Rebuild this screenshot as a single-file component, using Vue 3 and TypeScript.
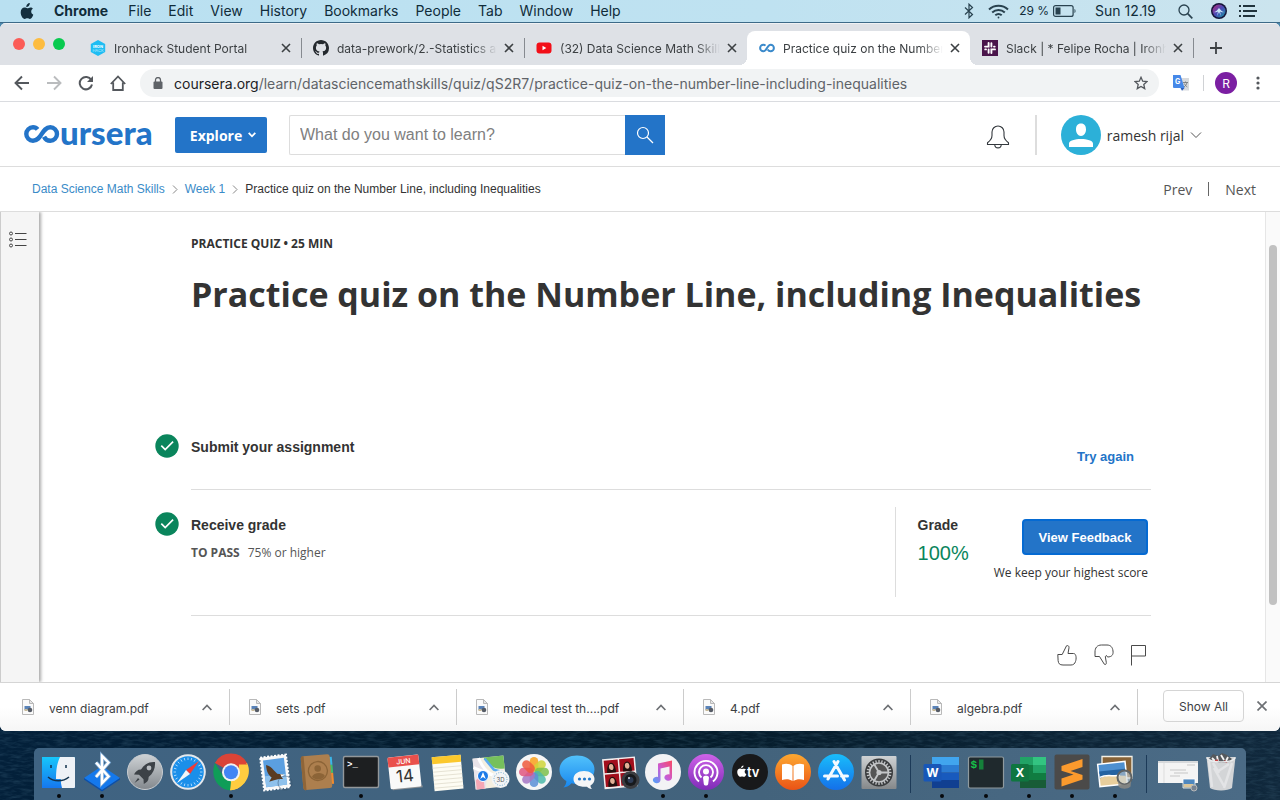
<script setup lang="ts">
import { ref } from 'vue'

interface BrowserTab {
  title: string
  icon: 'ironhack' | 'github' | 'youtube' | 'coursera' | 'slack'
  active?: boolean
}

const menus: string[] = ['File', 'Edit', 'View', 'History', 'Bookmarks', 'People', 'Tab', 'Window', 'Help']

const tabs: BrowserTab[] = [
  { title: 'Ironhack Student Portal', icon: 'ironhack' },
  { title: 'data-prework/2.-Statistics at', icon: 'github' },
  { title: '(32) Data Science Math Skills', icon: 'youtube' },
  { title: 'Practice quiz on the Number', icon: 'coursera', active: true },
  { title: 'Slack | * Felipe Rocha | Ironh', icon: 'slack' },
]

const downloads: string[] = ['venn diagram.pdf', 'sets .pdf', 'medical test th....pdf', '4.pdf', 'algebra.pdf']

const query = ref('')
const petals: string[] = ['#f8a01c', '#cfd53a', '#7cc04b', '#4bb8a9', '#5b8fd6', '#a576c4', '#e0567f', '#ef5a3c']
const teeth: number[] = Array.from({ length: 24 }, (_, i) => i * 15)
const ticks: number[] = Array.from({ length: 24 }, (_, i) => i * 15)
</script>

<template>
  <div class="desktop">
    <svg class="sea" aria-hidden="true">
      <filter id="waves" x="0" y="0" width="100%" height="100%">
        <feTurbulence type="fractalNoise" baseFrequency="0.09 0.35" numOctaves="3" seed="7" />
        <feColorMatrix values="0 0 0 0 0.14  0 0 0 0 0.3  0 0 0 0 0.42  1 0 0 0 -0.4" />
      </filter>
      <rect width="100%" height="100%" filter="url(#waves)" opacity=".45" />
    </svg>

    <nav class="menubar" aria-label="Menu bar">
      <button class="apple" aria-label="Apple menu">
        <svg width="14" height="17" viewBox="0 0 14 17"><path fill="#142f3e" d="M9.8 0c.1 1.200-.4 2.200-1 2.900-.7.700-1.600 1.200-2.500 1.100-.1-1.100.4-2.100 1-2.800C7.900.5 8.900.1 9.800 0zM12.900 5.700c-1.200.8-1.700 1.700-1.700 2.900 0 1.400.8 2.600 2.100 3.100-.5 1.500-1.800 4.200-3.400 4.200-1 0-1.400-.6-2.600-.6s-1.600.6-2.500.6C2.700 16 .7 12.400.7 9.200c0-3 1.900-4.700 3.800-4.700 1.200 0 2 .7 2.900.7.800 0 1.700-.8 3.100-.8 1 0 1.900.5 2.400 1.300z"/></svg>
      </button>
      <button class="menu strong">Chrome</button>
      <button v-for="m in menus" :key="m" class="menu">{{ m }}</button>
      <div class="status">
        <svg width="10" height="16" viewBox="0 0 10 16" fill="none" stroke="#29424f" stroke-width="1.200"><path d="M1 4.500l7.500 7L5 14.800V1.200l3.500 3.300-7.500 7"/></svg>
        <svg class="wifi" width="21" height="15" viewBox="0 0 21 15" fill="none" stroke="#29424f" stroke-width="2"><path d="M1 5.500c5.300-5 13.700-5 19 0M4.200 8.500c3.600-3.300 9-3.300 12.600 0M7.300 11.300c1.900-1.600 4.500-1.600 6.400 0"/><circle cx="10.500" cy="13.500" r=".9" fill="#29424f" stroke="none"/></svg>
        <span class="pct">29 %</span>
        <svg class="battery" width="24" height="12" viewBox="0 0 24 12"><rect x=".6" y=".6" width="19.500" height="10.800" rx="2" fill="none" stroke="#29424f" stroke-width="1.200"/><rect x="2.500" y="2.500" width="5" height="7" fill="#29424f"/><path d="M21.500 4v4c1.300-.4 1.300-3.600 0-4z" fill="#29424f"/></svg>
        <span class="clock">Sun 12.19</span>
        <svg class="lens" width="15" height="15" viewBox="0 0 15 15" fill="none" stroke="#29424f" stroke-width="1.300"><circle cx="6" cy="6" r="5"/><path d="M9.700 9.700L14.300 14.300" stroke-width="1.700"/></svg>
        <svg class="siri" width="16" height="16" viewBox="0 0 16 16">
          <defs><linearGradient id="siriG" x1="0" y1="0" x2="1" y2="1"><stop offset="0" stop-color="#f0308f"/><stop offset=".5" stop-color="#5a5ce0"/><stop offset="1" stop-color="#16c7c4"/></linearGradient></defs>
          <circle cx="8" cy="8" r="8" fill="#15153a"/><circle cx="8" cy="8" r="6.500" fill="url(#siriG)" opacity=".75"/><path d="M3 9c2.500-.5 3.500-2.500 5-4 1.500 1.500 2.500 3.500 5 4-2 .6-3 .2-4-.5l1 4.500-2-4-2 4 1-4.500c-1 .7-2 1.100-4 .5z" fill="#d6f4ff" opacity=".9"/>
        </svg>
        <svg width="19" height="12" viewBox="0 0 19 12" fill="#20333c"><path d="M0 0h2v2H0zM0 5h2v2H0zM0 10h2v2H0zM4 0h12v2H4zM4 5h14v2H4zM4 10h12v2H4z"/></svg>
      </div>
    </nav>

    <div class="window">
      <header class="tabstrip">
        <div class="lights"><i class="red"></i><i class="amber"></i><i class="green"></i></div>
        <div v-for="t in tabs" :key="t.icon" class="tab" :class="{ active: t.active }">
          <svg v-if="t.icon === 'ironhack'" width="16" height="16" viewBox="0 0 16 16"><path d="M8 0l7.200 4v8L8 16 .8 12V4z" fill="#1fbdf3"/><text x="8" y="7.500" font-size="4" font-weight="700" text-anchor="middle" fill="#fff">IRON</text><text x="8" y="11.500" font-size="4" text-anchor="middle" fill="#b4ebff">HACK</text></svg>
          <svg v-else-if="t.icon === 'github'" width="16" height="16" viewBox="0 0 16 16" fill="#24292e"><path d="M8 0C3.580 0 0 3.580 0 8c0 3.540 2.290 6.530 5.470 7.590.4.070.55-.17.55-.38v-1.340c-2.230.49-2.700-1.070-2.700-1.070-.36-.92-.89-1.170-.89-1.170-.73-.5.05-.49.05-.49.81.06 1.230.83 1.230.83.72 1.230 1.880.87 2.340.67.07-.52.28-.87.51-1.070-1.780-.2-3.640-.89-3.640-3.950 0-.87.31-1.590.82-2.150-.08-.2-.36-1.020.08-2.120 0 0 .67-.21 2.200.82a7.600 7.600 0 0 1 4 0c1.530-1.040 2.200-.82 2.200-.82.44 1.100.16 1.920.08 2.120.51.56.82 1.270.82 2.150 0 3.070-1.870 3.750-3.650 3.950.29.25.54.73.54 1.480v2.190c0 .21.150.46.55.38A8 8 0 0 0 16 8c0-4.420-3.580-8-8-8z"/></svg>
          <svg v-else-if="t.icon === 'youtube'" width="16" height="16" viewBox="0 0 16 16"><rect x=".5" y="2.500" width="15" height="11" rx="3" fill="#f20f18"/><path d="M6.500 5.800v4.400L10.300 8z" fill="#fff"/></svg>
          <svg v-else-if="t.icon === 'coursera'" width="16" height="16" viewBox="0 0 16 16"><path d="M6.500 5.600C5.900 5 5.200 4.700 4.400 4.700a3.300 3.300 0 0 0 0 6.600c3.600 0 3.600-6.600 7.200-6.600a3.300 3.300 0 0 1 0 6.600c-1.300 0-2.300-.7-2.900-1.700" fill="none" stroke="#3b8acb" stroke-width="2"/></svg>
          <svg v-else width="16" height="16" viewBox="0 0 16 16"><path fill="#4a154b" d="M0 0h16v16H0z"/><g fill="none" stroke="#fff" stroke-width="1.900" stroke-linecap="round"><path d="M6.600 3v3.600H3M9.400 3.300v3.300M12.700 6.600H12M13 9.400H9.400V13M6.600 12.700V9.400M3.200 9.400H4"/></g></svg>
          <span class="tabtitle">{{ t.title }}</span>
          <button class="close" :aria-label="'Close ' + t.title"><svg width="10" height="10" viewBox="0 0 10 10" stroke="#3c4043" stroke-width="1.600"><path d="M1 1l8 8M9 1L1 9"/></svg></button>
        </div>
        <button class="newtab" aria-label="New tab"><svg width="12" height="12" viewBox="0 0 12 12" stroke="#3c4043" stroke-width="1.800"><path d="M6 0v12M0 6h12"/></svg></button>
      </header>

      <div class="toolbar">
        <button aria-label="Back"><svg width="16" height="16" viewBox="0 0 16 16" fill="none" stroke="#54585d" stroke-width="1.900"><path d="M15 8H2M8 1.500L1.500 8 8 14.500"/></svg></button>
        <button aria-label="Forward"><svg width="16" height="16" viewBox="0 0 16 16" fill="none" stroke="#babcbe" stroke-width="1.900"><path d="M1 8h13M8 1.500L14.500 8 8 14.500"/></svg></button>
        <button aria-label="Reload"><svg width="16" height="16" viewBox="0 0 16 16"><path d="M13.300 5A6.200 6.200 0 1 0 14 9.500" fill="none" stroke="#54585d" stroke-width="2"/><path d="M15 1v6H9z" fill="#54585d"/></svg></button>
        <button aria-label="Home"><svg width="16" height="16" viewBox="0 0 16 16" fill="none" stroke="#54585d" stroke-width="1.800"><path d="M.8 9L8 1.500 15.200 9M3.200 7.500V15h9.600V7.500"/></svg></button>
        <div class="omnibox">
          <svg width="10" height="12" viewBox="0 0 10 12"><rect x=".5" y="4.500" width="9" height="7.500" rx="1" fill="#5f6368"/><path d="M2.500 5V3a2.500 2.500 0 0 1 5 0v2" fill="none" stroke="#5f6368" stroke-width="1.300"/></svg>
          <span class="url"><b>coursera.org</b>/learn/datasciencemathskills/quiz/qS2R7/practice-quiz-on-the-number-line-including-inequalities</span>
          <svg width="14" height="14" viewBox="0 0 14 14" fill="none" stroke="#54585d" stroke-width="1.300"><path d="M7 1.300l1.700 3.900 4.300.4-3.200 2.800.9 4.200L7 10.400l-3.700 2.200.9-4.200L1 5.600l4.300-.4z"/></svg>
        </div>
        <svg class="translate" width="16" height="16" viewBox="0 0 16 16"><path fill="#d8dadd" d="M6 3h10v12.500H9z"/><path fill="#4688e8" d="M0 0h7.500l4 13H1a1 1 0 0 1-1-1z"/><path d="M7.500 13h4L9 15.700z" fill="#2b5ebd"/><text x="2" y="8.500" font-size="7" font-weight="700" fill="#fff">G</text><path d="M10 7.500h5M12.500 6.500v1M14 7.500c-.5 2-1.500 3.500-3 4.500M11.300 8.500c.5 1.500 1.700 2.500 3 3.500" stroke="#6d7175" stroke-width=".8" fill="none"/></svg>
        <i class="bar"></i>
        <button class="me" aria-label="Profile">R</button>
        <button class="more" aria-label="More"><svg width="4" height="14" viewBox="0 0 4 14" fill="#54585d"><circle cx="2" cy="2" r="1.600"/><circle cx="2" cy="7" r="1.600"/><circle cx="2" cy="12" r="1.600"/></svg></button>
      </div>

      <div class="site">
        <a class="logo" href="#" aria-label="coursera">
          <svg width="36" height="18" viewBox="0 0 36 18" fill="none" stroke="#2374c8" stroke-width="4.400"><path d="M13.600 4.400C12.500 3 11 2.300 9 2.300a6.700 6.700 0 0 0 0 13.400C18 15.700 17.500 2.300 26.300 2.300a6.700 6.700 0 0 1 0 13.400c-2.900 0-5.100-1.500-6.300-4"/></svg><span>ursera</span>
        </a>
        <button class="explore">Explore <svg width="8" height="6" viewBox="0 0 8 6" fill="none" stroke="#fff" stroke-width="1.800"><path d="M.7.900L4 4.300 7.300.9"/></svg></button>
        <form class="search" @submit.prevent>
          <input v-model="query" type="text" aria-label="Search" placeholder="What do you want to learn?" />
          <button aria-label="Search"><svg width="18" height="18" viewBox="0 0 18 18" fill="none" stroke="#fff" stroke-width="1.200"><circle cx="7" cy="7" r="5.500"/><path d="M11 11l6 6"/></svg></button>
        </form>
        <button class="bell" aria-label="Notifications"><svg width="24" height="26" viewBox="0 0 24 26" fill="none" stroke="#33383d" stroke-width="1.100"><path d="M1.500 20.500v-1.800C4.500 16.500 6 14.500 6 11.500V8a6 6 0 0 1 12 0v3.500c0 3 1.500 5 4.500 7.200v1.800zM8.700 20.500c.3 4.500 6.300 4.500 6.600 0"/></svg></button>
        <i class="rule"></i>
        <button class="account">
          <svg width="40" height="40" viewBox="0 0 40 40"><circle cx="20" cy="20" r="20" fill="#2cb0d8"/><path fill="#fff" d="M20 8.500c3.500 0 5 2.500 5 6s-2 6.500-5 6.500-5-3-5-6.500 1.500-6 5-6zM8 32v-3.500C8 25.500 14 24 20 24s12 1.500 12 4.500V32z"/></svg>
          <span>ramesh rijal</span>
          <svg width="12" height="8" viewBox="0 0 12 8" fill="none" stroke="#555"><path d="M1 1.500l5 5 5-5"/></svg>
        </button>
      </div>

      <div class="crumbs">
        <a href="#">Data Science Math Skills</a>
        <svg width="6" height="9" viewBox="0 0 6 9" fill="none" stroke="#888"><path d="M1 .5l4 4-4 4"/></svg>
        <a href="#">Week 1</a>
        <svg width="6" height="9" viewBox="0 0 6 9" fill="none" stroke="#888"><path d="M1 .5l4 4-4 4"/></svg>
        <span>Practice quiz on the Number Line, including Inequalities</span>
        <div class="pager"><a href="#">Prev</a><i></i><a href="#">Next</a></div>
      </div>

      <div class="page">
        <aside class="rail">
          <button aria-label="Course outline"><svg width="18" height="17" viewBox="0 0 18 17" fill="none" stroke="#444"><circle cx="2" cy="2.500" r="1.500"/><circle cx="2" cy="8.500" r="1.500"/><circle cx="2" cy="14.500" r="1.500"/><path d="M6 2.500h11.500M6 8.500h11.500M6 14.500h11.500"/></svg></button>
        </aside>
        <main class="content">
          <p class="kind">PRACTICE QUIZ • 25 MIN</p>
          <h1>Practice quiz on the Number Line, including Inequalities</h1>

          <section class="step first">
            <svg class="check" width="24" height="24" viewBox="0 0 24 24"><circle cx="12" cy="12" r="11.700" fill="#0a855c"/><path d="M6.300 11.700l3.900 3.900 7.900-7.900" fill="none" stroke="#fff" stroke-width="1.700"/></svg>
            <h2>Submit your assignment</h2>
            <button class="again">Try again</button>
          </section>

          <section class="step second">
            <svg class="check" width="24" height="24" viewBox="0 0 24 24"><circle cx="12" cy="12" r="11.700" fill="#0a855c"/><path d="M6.300 11.700l3.900 3.900 7.900-7.900" fill="none" stroke="#fff" stroke-width="1.700"/></svg>
            <div class="receive">
              <h2>Receive grade</h2>
              <p><strong>TO PASS</strong>75% or higher</p>
            </div>
            <div class="grade">
              <div class="score"><h2>Grade</h2><span>100%</span></div>
              <div class="feedback"><button>View Feedback</button><p>We keep your highest score</p></div>
            </div>
          </section>

          <div class="react">
            <button aria-label="Like"><svg width="20" height="22" viewBox="0 0 20 22" fill="none" stroke="#4a4a4a" stroke-width="1"><path d="M.8 10.500h4.400L9.500 1.800c1.500-.6 2.700.2 2.500 2L11 9.500h5.500c3 0 3 5.500 2 8-.7 2.300-2.200 3.500-4.500 3.500H6c-3.500 0-4.600-1.500-4.900-4.500z"/></svg></button>
            <button aria-label="Dislike"><svg width="20" height="22" viewBox="0 0 20 22" fill="none" stroke="#4a4a4a" stroke-width="1"><path d="M1 12.500h4.500l4.800 7.700c1.200.8 2.200 0 2-1.700l-1-6 1.200-1 1 1.500c4.500 0 6-2.500 5.500-6-.5-4-2.500-6-6-6H7.500C3 1 1 4 1 8z"/></svg></button>
            <button aria-label="Flag"><svg width="16" height="22" viewBox="0 0 16 22" fill="none" stroke="#4a4a4a" stroke-width="1"><path d="M.5 21.500v-20h14v10.500H.5"/></svg></button>
          </div>
        </main>
        <div class="scroll"><i></i></div>
      </div>

      <footer class="downloads">
        <div v-for="d in downloads" :key="d" class="file">
          <svg width="12" height="16" viewBox="0 0 12 16"><path d="M.5.500h7L11.500 4.500v11H.5z" fill="#fafafa" stroke="#b9b9b9"/><path d="M7.500.500v4h4z" fill="#e6e6e6" stroke="#b9b9b9"/><path d="M2.500 7h6v4h-6z" fill="#5a83b8"/><circle cx="8" cy="11" r="2.300" fill="#565c66"/><path d="M2.500 10h3v2h-3z" fill="#c8ba98"/></svg>
          <a href="#">{{ d }}</a>
          <button :aria-label="'Options for ' + d"><svg width="10" height="7" viewBox="0 0 10 7" fill="none" stroke="#6d7074" stroke-width="1.700"><path d="M.6 6L5 1.400 9.400 6"/></svg></button>
        </div>
        <button class="showall">Show All</button>
        <button class="shut" aria-label="Close downloads"><svg width="10" height="10" viewBox="0 0 10 10" stroke="#6d7074" stroke-width="1.700"><path d="M.5.500l9 9M9.500.500l-9 9"/></svg></button>
      </footer>
    </div>

    <nav class="dock" aria-label="Dock">
      <button class="app on" aria-label="Finder"><svg viewBox="0 0 40 40"><defs><linearGradient id="gFind" x1="0" y1="0" x2="0" y2="1"><stop offset="0" stop-color="#16c6fb"/><stop offset="1" stop-color="#1677ee"/></linearGradient></defs><path fill="url(#gFind)" d="M3 5h33v31H3z"/><path d="M21 5h14a1 1 0 0 1 1 1v29a1 1 0 0 1-1 1H23c-1-4-1.200-6-1.200-9H17C17 18 18 11 21 5z" fill="#eef1f6"/><path d="M12 13v3M27 13v3M9 25c5.500 5 15 5 21 0" stroke="#12324e" stroke-width="1.500" fill="none"/></svg></button>
      <button class="app on" aria-label="Bluetooth"><svg viewBox="0 0 40 40"><path d="M20 14l18 12-18 12L2 26z" fill="#1478ec"/><path d="M20 38L2 26v1.500L20 39.500l18-12V26z" fill="#084fae"/><path d="M14 10.500l12.500 14L20 31V4l6.500 6.500L14 25" fill="none" stroke="#7da9d4" stroke-width="4"/><path d="M14 10.500l12.500 14L20 31V4l6.500 6.500L14 25" fill="none" stroke="#fff" stroke-width="2.400"/></svg></button>
      <button class="app" aria-label="Launchpad"><svg viewBox="0 0 40 40"><defs><linearGradient id="gLau" x1="0" y1="0" x2="0" y2="1"><stop offset="0" stop-color="#ced2d5"/><stop offset="1" stop-color="#83888d"/></linearGradient></defs><circle cx="20" cy="20" r="17.500" fill="url(#gLau)" stroke="#c9cdd1"/><path d="M30 10c-6-.5-10.500 2-14 7.500-3.500 0-5.500 2-7 5l5 .2 4.500 4.500.3 4.800c3-1.500 5-3.500 4.800-7C28.500 21 30.500 16 30 10zM13 26l-3.500 5 5-3.500z" fill="#3d4247"/><circle cx="24" cy="16" r="2.400" fill="#b9bdc1"/></svg></button>
      <button class="app" aria-label="Safari"><svg viewBox="0 0 40 40"><circle cx="20" cy="20" r="17.800" fill="#e6e9ec"/><circle cx="20" cy="20" r="15.800" fill="#1a8fea"/><path v-for="a in ticks" :key="a" d="M20 5.500v2.500" stroke="#bfe3ff" stroke-width=".8" :transform="`rotate(${a} 20 20)`"/><path d="M31 9L22 22l-4-4z" fill="#f23b36"/><path d="M9 31l9-13 4 4z" fill="#f3f5f7"/></svg></button>
      <button class="app on" aria-label="Chrome"><svg viewBox="0 0 40 40"><path d="M20 20L4 11a18.300 18.300 0 0 1 32 0z" fill="#db4437"/><path d="M20 20h16.400A18.300 18.300 0 0 1 20 38.300L19 38z" fill="#ffcd40"/><path d="M36 11c3.500 6.500 2 14.500-2.500 20C29 36 24 38.300 19 38.200L27.500 24 28 11z" fill="#ffcd40"/><path d="M4 11l8.500 13.500L20 29l-1 9.200C7 37.800-1.500 24 4 11z" fill="#0f9d58"/><path d="M4 11a18.300 18.300 0 0 1 32 1.500H20z" fill="#db4437"/><circle cx="20" cy="20.300" r="9" fill="#f1f1f1"/><circle cx="20" cy="20.300" r="7" fill="#4285f4"/></svg></button>
      <button class="app" aria-label="Mail"><svg viewBox="0 0 40 40"><g transform="rotate(-7 20 20)"><path d="M7 4h26v33H7z" fill="#f7f7f7" stroke="#fff" stroke-width="2" stroke-dasharray="2 1.500"/><path d="M9.500 7h21v27h-21z" fill="#5b9fe0"/><path d="M9.500 23h21v11h-21z" fill="#8ec1ec"/><path d="M12 12c3 1 5 3 7 6l3 4 6 1.500-2 2 1 2.500-4-.5-5 .5-5 1 3-4c-3-3-4.500-7-4-13z" fill="#5a3c22"/><path d="M25 23l4 1-3 2z" fill="#fff"/></g><circle cx="30" cy="31" r="7" fill="none" stroke="#36506a" stroke-width="1" opacity=".5"/></svg></button>
      <button class="app" aria-label="Contacts"><svg viewBox="0 0 40 40"><g transform="rotate(-5 20 20)"><path d="M32 6h3v8h-3z" fill="#3ab6e8"/><path d="M32 14h3v8h-3z" fill="#44bf67"/><path d="M32 22h3v11h-3z" fill="#ef8b2f"/><rect x="4" y="3" width="29" height="34" rx="2.500" fill="#ad7f4e"/><path d="M4 5a2 2 0 0 1 2-2h1v34H6a2 2 0 0 1-2-2z" fill="#8f6538"/><circle cx="20" cy="19" r="9.500" fill="none" stroke="#8c6437" stroke-width="1.300"/><circle cx="20" cy="16.500" r="3.300" fill="#8c6437"/><path d="M13.500 24.500c2-4.500 11-4.500 13 0-3 4-10 4-13 0z" fill="#8c6437"/></g></svg></button>
      <button class="app on" aria-label="Terminal"><svg viewBox="0 0 40 40"><rect x="2.500" y="4.500" width="35" height="31" rx="1.500" fill="#1d1f21" stroke="#93989b" stroke-width="1.400"/><text x="6" y="15" font-size="9" font-weight="700" font-family="Liberation Mono, monospace" fill="#fff">&gt;_</text></svg></button>
      <button class="app" aria-label="Calendar"><svg viewBox="0 0 40 40"><g transform="rotate(-6 20 20)"><path d="M7 35h30v2H7z" fill="#8b9094"/><rect x="5" y="4" width="31" height="32" rx="1.500" fill="#f9f9f9"/><path d="M5 4h31v10H5z" fill="#e9504c"/><text x="20.500" y="11.800" font-size="7" font-weight="500" text-anchor="middle" fill="#fff">JUN</text><text x="20.500" y="30" font-size="17" text-anchor="middle" fill="#333">14</text></g></svg></button>
      <button class="app" aria-label="Notes"><svg viewBox="0 0 40 40"><g transform="rotate(-5 20 20)"><path d="M6 4h29v34H6z" fill="#fdfcf3"/><path d="M6 4h29v7H6z" fill="#fbc82c"/><path d="M6 15h29M6 19h29M6 23h29M6 27h29M6 31h29M6 35h29" stroke="#dcd8c8" stroke-width=".7"/></g></svg></button>
      <button class="app" aria-label="Maps"><svg viewBox="0 0 40 40"><g transform="rotate(-6 20 20)"><path d="M4 5h31v31H4z" fill="#f4efe0"/><path d="M15 5h20v13c-7 0-10-1-13-4s-5-5-7-9z" fill="#76c05c"/><path d="M4 5h7l7 13-4 18H4z" fill="#e8e4ea"/><path d="M4 14l31 16M10 5c5 16 12 20 25 22" stroke="#fff" stroke-width="3" fill="none"/><path d="M5 27l8-7v16H5z" fill="#f4a7b5"/><path d="M16 6l8 12 10 4" stroke="#5aabf0" stroke-width="2.500" fill="none"/></g><circle cx="13" cy="24" r="5.500" fill="#1b7ae8" stroke="#fff"/><path d="M13 20l2.800 7-2.800-2-2.800 2z" fill="#fff"/><circle cx="30.500" cy="27" r="9" fill="#f3f4f5"/><circle cx="30.500" cy="27" r="6.500" fill="none" stroke="#6caed3" stroke-dasharray="1 1.500"/><text x="30.500" y="29.500" font-size="6" text-anchor="middle" fill="#555">3D</text></svg></button>
      <button class="app" aria-label="Photos"><svg viewBox="0 0 40 40"><circle cx="20" cy="20" r="18" fill="#f6f6f6"/><rect v-for="(c, i) in petals" :key="c" x="15.700" y="5" width="8.600" height="14.500" rx="4.300" :fill="c" fill-opacity=".85" :transform="`rotate(${i * 45} 20 20)`"/></svg></button>
      <button class="app" aria-label="Messages"><svg viewBox="0 0 40 40"><defs><linearGradient id="gMsg" x1="0" y1="0" x2="0" y2="1"><stop offset="0" stop-color="#52c2fb"/><stop offset="1" stop-color="#1887ef"/></linearGradient></defs><path d="M20 3.500c9.700 0 17.500 6 17.500 14S29.700 32 20 32c-2 0-4-.2-5.500-.7C12 34 10 35 6.500 35.500c2-2 3-4 2.800-6.500C5 26.500 2.500 22.500 2.500 17.500c0-8 7.800-14 17.500-14z" fill="url(#gMsg)"/><path d="M27 19c6 0 10.500 3 10.500 8 0 3-1.500 5-4 6.500 0 1.500.5 2.500 1.500 3.500-2.500-.3-4-1-5-2.200-8 .5-13.500-2.300-13.500-7.800 0-5 4.500-8 10.500-8z" fill="#f5f6f7"/><g fill="#2278c9"><circle cx="22.500" cy="27" r="1.600"/><circle cx="27.500" cy="27" r="1.600"/><circle cx="32.500" cy="27" r="1.600"/></g></svg></button>
      <button class="app" aria-label="Photo Booth"><svg viewBox="0 0 40 40"><g transform="rotate(-5 18 18)"><path d="M3 6h33v30H3z" fill="#f3eeee"/><path d="M4.500 7.500h14V20h-14zM20 7.500h14.500V20H20zM4.500 21.500h14V34h-14zM20 21.500h14.500V34H20z" fill="#a20e1c"/><g fill="#24100f"><path d="M7 20c0-13 9-13 9 0zM23 20c0-13 9-13 9 0zM7 34c0-13 9-13 9 0z"/></g><g fill="#e3b197"><ellipse cx="11.500" cy="14.500" rx="2.300" ry="3"/><ellipse cx="27.500" cy="14.500" rx="2.300" ry="3"/><ellipse cx="11.500" cy="28.500" rx="2.300" ry="3"/></g></g><circle cx="30.500" cy="28" r="9" fill="#3b3d41"/><circle cx="30.500" cy="28" r="6" fill="#17191c"/><circle cx="30.500" cy="28" r="3" fill="#2e3c55"/><circle cx="29" cy="26" r="1" fill="#d7dde6"/></svg></button>
      <button class="app on" aria-label="Music"><svg viewBox="0 0 40 40"><defs><linearGradient id="gMus" x1="1" y1="0" x2="0" y2="1"><stop offset="0" stop-color="#fb4a63"/><stop offset=".5" stop-color="#c95bd5"/><stop offset="1" stop-color="#4aa6fb"/></linearGradient></defs><circle cx="20" cy="20" r="18" fill="#f3f3f5"/><path d="M15 11.500l14-3v17a3.800 3.200 0 1 1-2.500-3V14.500l-9 2V28a3.800 3.200 0 1 1-2.500-3z" fill="url(#gMus)"/></svg></button>
      <button class="app on" aria-label="Podcasts"><svg viewBox="0 0 40 40"><defs><linearGradient id="gPod" x1="0" y1="0" x2="0" y2="1"><stop offset="0" stop-color="#cf63e8"/><stop offset="1" stop-color="#7f2cb8"/></linearGradient></defs><circle cx="20" cy="20" r="18" fill="url(#gPod)"/><g fill="none" stroke="#fff" stroke-width="1.900"><path d="M13 29.500a11.500 11.500 0 1 1 14 0M15.500 25.500a7 7 0 1 1 9 0"/></g><circle cx="20" cy="19.500" r="3" fill="#fff"/><path d="M17 25.500c0-2.500 6-2.500 6 0l-.8 6.500c-.4 2-4 2-4.400 0z" fill="#fff"/></svg></button>
      <button class="app" aria-label="TV"><svg viewBox="0 0 40 40"><circle cx="20" cy="20" r="18" fill="#18191b"/><path d="M13.500 13.500c.1 1.300-1 2.600-2.400 2.500 0-1.300 1.100-2.400 2.400-2.500zM16 17.500c-2 1.200-1.600 3.800.4 4.500-.8 2.300-2 3.300-3.200 2.700-.8-.4-1.500-.4-2.300 0-1.800.8-4-2.700-3.600-5.500.4-2.700 2.800-3.200 4.800-2.100 1.400-.7 3-.6 3.900.4z" fill="#fff"/><text x="17" y="24.500" font-size="13" font-weight="600" fill="#fff">tv</text></svg></button>
      <button class="app" aria-label="Books"><svg viewBox="0 0 40 40"><defs><linearGradient id="gBok" x1="0" y1="0" x2="0" y2="1"><stop offset="0" stop-color="#fda830"/><stop offset="1" stop-color="#ea5316"/></linearGradient></defs><circle cx="20" cy="20" r="18" fill="url(#gBok)"/><path d="M19.500 14c-2.500-2.500-7-2.800-10.500-1.500V28c3.500-1 7.500-1 10.500 1zM20.500 14c2.500-2.500 7-2.800 10.500-1.500V28c-3.500-1-7.500-1-10.500 1z" fill="#fff"/></svg></button>
      <button class="app" aria-label="App Store"><svg viewBox="0 0 40 40"><defs><linearGradient id="gSto" x1="0" y1="0" x2="0" y2="1"><stop offset="0" stop-color="#19bdfb"/><stop offset="1" stop-color="#1470ea"/></linearGradient></defs><circle cx="20" cy="20" r="18" fill="url(#gSto)"/><path d="M22 9.500L12 27M18 9.500L28.500 28M8.500 24h13M25.500 24h6" stroke="#f3faff" stroke-width="3" stroke-linecap="round"/></svg></button>
      <button class="app" aria-label="System Preferences"><svg viewBox="0 0 40 40"><defs><linearGradient id="gSys" x1="0" y1="0" x2="0" y2="1"><stop offset="0" stop-color="#cfd2d4"/><stop offset="1" stop-color="#85888a"/></linearGradient></defs><rect x="2.500" y="4" width="35" height="33" rx="1" fill="url(#gSys)"/><circle cx="20" cy="20.500" r="14" fill="#3a3c3e"/><path v-for="a in teeth" :key="a" d="M20 8v2.500" stroke="#c4c6c8" stroke-width="1.300" :transform="`rotate(${a} 20 20.500)`"/><circle cx="20" cy="20.500" r="9.500" fill="#555" stroke="#c4c6c8" stroke-width="1.700"/><path d="M20 20.500h10M20 20.500l-5-8.500M20 20.500l-5 8.500" stroke="#c4c6c8" stroke-width="1.800"/><circle cx="20" cy="20.500" r="2.600" fill="#c4c6c8"/></svg></button>
      <i class="divider"></i>
      <button class="app on" aria-label="Word"><svg viewBox="0 0 40 40"><path fill="#41a5ee" d="M10 5h27v8H10z"/><path fill="#2b7cd3" d="M10 13h27v7.500H10z"/><path fill="#185abd" d="M10 20.500h27V28H10z"/><path fill="#103f91" d="M10 28h27v8H10z"/><rect x="1.500" y="12" width="18" height="17.500" rx="1.500" fill="#1857b8"/><text x="10.500" y="25" font-size="12" font-weight="700" text-anchor="middle" fill="#fff">W</text></svg></button>
      <button class="app on" aria-label="iTerm"><svg viewBox="0 0 40 40"><rect x="2.500" y="5" width="35" height="31" rx="1.500" fill="#1f292d" stroke="#8f9a9e" stroke-width="1.200"/><text x="4.500" y="16" font-size="11" font-weight="700" font-family="Liberation Mono, monospace" fill="#17c24a">$</text><path d="M13 7.500h4.500v10H13z" fill="#15803a"/></svg></button>
      <button class="app on" aria-label="Excel"><svg viewBox="0 0 40 40"><path fill="#21a366" d="M11 5h13v8H11z"/><path fill="#33c481" d="M24 5h13v8H24z"/><path fill="#107c41" d="M11 13h13v15H11z"/><path fill="#21a366" d="M24 13h13v8H24z"/><path fill="#107c41" d="M24 21h13v7H24z"/><path fill="#185c37" d="M11 28h26v8H11z"/><rect x="2" y="12" width="18" height="17.500" rx="1.500" fill="#0f7640"/><text x="11" y="25" font-size="12" font-weight="700" text-anchor="middle" fill="#fff">X</text></svg></button>
      <button class="app on" aria-label="Sublime Text"><svg viewBox="0 0 40 40"><rect x="2.500" y="2.500" width="35" height="35" rx="2" fill="#4b4a49"/><path d="M9.500 14L30.500 7v8l-12 4 12 4v4.500l-21 7v-8l12-4-12-3.800z" fill="#fb9a2d"/></svg></button>
      <button class="app on" aria-label="Preview"><svg viewBox="0 0 40 40"><path d="M7 4.500h30V26H7z" fill="#866237" stroke="#f5f1e6" stroke-width="1.300"/><g transform="rotate(-6 18 22)"><path d="M3 10h29v24H3z" fill="#fff"/><path d="M4.500 11.500h26v9h-26z" fill="#4d8fcf"/><path d="M4.500 18h26v8h-26z" fill="#2563a1"/><path d="M4.500 25c8-4 17-1 26 0v7.500h-26z" fill="#e7ce9c"/><path d="M4.500 24c8-3 13 1 20 0" stroke="#fff" stroke-width="1.500" fill="none"/></g><circle cx="29.500" cy="25.500" r="7" fill="#c9d3d8" fill-opacity=".6" stroke="#5e6365" stroke-width="2"/><path d="M23 29c3 5 10 5 13 0l-.5 5.500c-3 3-9 3-12 0z" fill="#8b8984" opacity=".85"/></svg></button>
      <i class="divider"></i>
      <button class="app" aria-label="Minimised document"><svg viewBox="0 0 40 40"><path d="M0 9h40v22H0z" fill="#f4f4f4"/><path d="M0 9h40v2H0z" fill="#d7d9db"/><path d="M6 11v20" stroke="#ddd"/><path d="M12 18h16M16 21h14M12 24h10M29 13h8" stroke="#bbb" stroke-width=".8"/><path d="M25 27h12v9H25z" fill="#4f88bf" stroke="#fff" stroke-width=".8"/><path d="M25.500 32h10v3.500h-10z" fill="#dbc69b"/><circle cx="36" cy="36" r="3" fill="#778391" stroke="#b5b7b8"/></svg></button>
      <button class="app" aria-label="Bin"><svg viewBox="0 0 40 40"><path d="M5.500 5h29l-3.500 31c-4 3.200-18 3.200-22 0z" fill="#d3d5d7"/><path d="M8 9l3 26M13 16l10 18M31 11l-8 25M28 12l-12 8M12 11l6 10" stroke="#e3e4e6" stroke-width="2.500"/><path d="M8 7l4-5 5 2 4-3 5 2 5 4-3 3-9 1z" fill="#55595d"/><path d="M11 6l3 3M20 3l3 5M27 5l-2 4M16 4l1 5" stroke="#f4f4f4" stroke-width="1.800"/><path d="M14 9l3-1M23 9l3 1" stroke="#c34040" stroke-width="1.500"/><path d="M5.500 5.500c3 6 26 6 29 0" fill="none" stroke="#eceeef" stroke-width="1.500"/></svg></button>
    </nav>
  </div>
</template>

<style>
html,
body {
  margin: 0;
  background: #061c2e;
}
</style>

<style scoped>
* {
  box-sizing: border-box;
}
.desktop {
  position: relative;
  display: flex;
  flex-direction: column;
  min-height: 100vh;
  overflow: hidden;
  font-family: Inter, 'Liberation Sans', sans-serif;
  color: #333;
  background:
    linear-gradient(#4a86ab, #4a86ab) 0 0 / 100% 40px no-repeat,
    linear-gradient(90deg, #03203a, #041b2a 50%, #10283c);
}
.sea {
  position: absolute;
  left: 0;
  right: 0;
  bottom: 0;
  width: 100%;
  height: 80px;
}
button {
  display: flex;
  align-items: center;
  justify-content: center;
  flex: none;
  margin: 0;
  padding: 0;
  border: 0;
  background: none;
  font: inherit;
  color: inherit;
}
a {
  color: inherit;
  text-decoration: none;
}
svg {
  flex: none;
  display: block;
}
h1,
h2,
p {
  margin: 0;
}

.menubar {
  display: flex;
  align-items: center;
  height: 23px;
  padding: 0 22px 0 20px;
  font-size: 14px;
  line-height: 20px;
  color: #102c3a;
  background: linear-gradient(90deg, #b9e0f1, #bfe2f1 60%, #cbe4ee);
  border-bottom: 1px solid #3d6a88;
  position: relative;
}
.apple {
  width: 14px;
  margin-right: 20px;
}
.menu {
  margin-right: 17px;
}
.strong {
  margin-right: 20px;
  font-weight: 700;
}
.status {
  display: flex;
  align-items: center;
  margin-left: auto;
}
.status > * {
  margin-left: 15px;
}
.status .wifi {
  margin-left: 14px;
}
.status .pct {
  margin-left: 10px;
  font-size: 12px;
}
.status .battery {
  margin-left: 4px;
}
.status .clock {
  margin-left: 18px;
}
.status .lens {
  margin-left: 22px;
}
.status .siri {
  margin-left: 18px;
}
.status > :last-child {
  margin-left: 12px;
}

.window {
  position: relative;
  flex: 1;
  display: flex;
  flex-direction: column;
  margin-bottom: 17px;
  border-radius: 6px;
  overflow: hidden;
  background: #fff;
}
.tabstrip {
  display: flex;
  height: 42px;
  padding-top: 7px;
  border-top: 1px solid #f0f1f3;
  background: #dee1e6;
}
.lights {
  display: flex;
  gap: 8px;
  width: 78px;
  padding: 7px 0 0 13px;
}
.lights i {
  width: 12px;
  height: 12px;
  border-radius: 50%;
}
.red {
  background: #fb5c57;
}
.amber {
  background: #fdbc40;
}
.green {
  background: #08ca4f;
}
.tab {
  position: relative;
  display: flex;
  align-items: center;
  flex: 0 1 223px;
  min-width: 0;
  padding: 0 10px 0 12px;
  font-size: 12px;
  color: #3c4043;
}
.tab:not(.active):not(:has(+ .active))::after {
  content: '';
  position: absolute;
  right: -1px;
  top: 7px;
  width: 1px;
  height: 20px;
  background: #868a90;
}
.active {
  background: #fff;
  border-radius: 8px 8px 0 0;
}
.active::before,
.active::after {
  content: '';
  position: absolute;
  bottom: 0;
  width: 8px;
  height: 8px;
}
.active::before {
  left: -8px;
  background: radial-gradient(circle at 0 0, #dee1e6 8px, #fff 8px);
}
.active::after {
  right: -8px;
  background: radial-gradient(circle at 100% 0, #dee1e6 8px, #fff 8px);
}
.tabtitle {
  flex: 1;
  margin: 0 7px 0 8px;
  overflow: hidden;
  white-space: nowrap;
  mask-image: linear-gradient(90deg, #000 calc(100% - 24px), transparent);
}
.close {
  width: 10px;
}
.newtab {
  width: 46px;
}

.toolbar {
  display: flex;
  align-items: center;
  height: 37px;
  padding: 0 17px 0 14px;
  gap: 16px;
  border-bottom: 1px solid #dadce0;
}
.toolbar button {
  width: 16px;
}
.omnibox {
  display: flex;
  align-items: center;
  flex: 1;
  height: 28px;
  margin: 0 -2px;
  padding: 0 11px 0 13px;
  border-radius: 14px;
  background: #f1f3f4;
  min-width: 0;
}
.url {
  flex: 1;
  margin-left: 11px;
  font-size: 14px;
  color: #5f6368;
  white-space: nowrap;
  overflow: hidden;
}
.url b {
  font-weight: 400;
  color: #202124;
}
.bar {
  width: 1px;
  height: 16px;
  margin: 0 -5px 0 -2px;
  background: #d0d2d5;
}
.toolbar .me {
  width: 22px;
  height: 22px;
  border-radius: 50%;
  font-size: 12px;
  color: #fff;
  background: #7b1fa2;
}
.toolbar .more {
  width: 10px;
}

.site {
  display: flex;
  align-items: center;
  height: 65px;
  padding: 2px 78px 0 24px;
  border-bottom: 1px solid #ddd;
  font-family: 'Open Sans', sans-serif;
}
.logo {
  display: flex;
  align-items: center;
  width: 128px;
  margin: 0 23px 2px 0;
  color: #2374c8;
}
.logo span {
  font: 900 33px/20px Lato, sans-serif;
  margin-bottom: 4px;
}
.explore {
  gap: 6px;
  width: 92px;
  height: 36px;
  margin-right: 22px;
  padding-left: 4px;
  border-radius: 2px;
  font-size: 14px;
  font-weight: 700;
  color: #fff;
  background: #2374c8;
}
.search {
  display: flex;
  flex: 0 1 376px;
  height: 40px;
}
.search input {
  flex: 1;
  min-width: 0;
  padding: 0 10px;
  border: 1px solid #ddd;
  border-right: 0;
  border-radius: 2px 0 0 2px;
  font: 16px 'Liberation Sans', sans-serif;
  color: #333;
  outline: 0;
}
.search input::placeholder {
  color: #808080;
  opacity: 1;
}
.search button {
  width: 40px;
  background: #2374c8;
}
.bell {
  width: 24px;
  margin: 4px 25px 0 auto;
}
.rule {
  width: 2px;
  height: 40px;
  background: #ddd;
}
.account {
  margin-left: 24px;
  font-size: 14px;
}
.account span {
  margin: 0 6px;
}

.crumbs {
  display: flex;
  align-items: center;
  height: 45px;
  padding: 0 24px 0 32px;
  border-bottom: 1px solid #ddd;
  font: 12px 'Liberation Sans', sans-serif;
}
.crumbs > a {
  color: #3a8bc8;
}
.crumbs > svg {
  margin: 0 7px;
}
.pager {
  display: flex;
  align-items: center;
  margin-left: auto;
  font: 14px 'Open Sans', sans-serif;
  color: #555;
}
.pager i {
  width: 1px;
  height: 14px;
  margin: 0 16px;
  background: #666;
}

.page {
  display: flex;
  flex: 1;
  overflow: hidden;
}
.rail {
  width: 39px;
  padding: 19px 0 0 8px;
  background: #f5f5f5;
  border-left: 1px solid #ccc;
  box-shadow: 2px 0 3px #aaa;
}
.content {
  flex: 1;
  max-width: 1112px;
  padding: 23px 0 14px 152px;
}
.kind {
  font: 700 12px/18px 'Open Sans', sans-serif;
}
h1 {
  margin-top: 17px;
  font: 700 34px/48px 'Open Sans', sans-serif;
}
h2 {
  font: 700 14px/20px 'Liberation Sans', sans-serif;
}
.step {
  display: flex;
  align-items: flex-start;
  border-bottom: 1px solid #ddd;
}
.check {
  margin: 0 12px 0 -36px;
}
.first {
  height: 56px;
  margin-top: 116px;
}
.first h2 {
  margin-top: 3px;
}
.again {
  height: 20px;
  margin: 12px 17px 0 auto;
  font: 700 13px 'Liberation Sans', sans-serif;
  color: #2374c8;
}
.second {
  min-height: 126px;
  padding: 17px 0;
}
.second .check {
  margin-top: 5px;
}
.receive {
  padding-top: 8px;
}
.receive p {
  margin-top: 9px;
  font: 12px/18px 'Open Sans', sans-serif;
  color: #555;
}
.receive strong {
  margin-right: 8px;
}
.grade {
  display: flex;
  height: 90px;
  margin-left: auto;
  padding: 12px 3px 0 22px;
  border-left: 1px solid #ddd;
}
.score {
  margin-top: -4px;
  margin-right: 25px;
}
.score span {
  display: block;
  margin-top: 6px;
  font: 20px/24px 'Liberation Sans', sans-serif;
  color: #0a855c;
}
.feedback {
  display: flex;
  flex-direction: column;
  align-items: flex-end;
}
.feedback button {
  width: 126px;
  height: 36px;
  border: 2px solid #056ad2;
  border-radius: 4px;
  font: 700 13px 'Liberation Sans', sans-serif;
  color: #fff;
  background: #2374c8;
}
.feedback p {
  margin-top: 9px;
  font: 12px/18px 'Open Sans', sans-serif;
}
.react {
  display: flex;
  justify-content: flex-end;
  gap: 17px;
  padding: 28px 4px 0 0;
}
.scroll {
  width: 15px;
  margin-left: auto;
  padding: 33px 0 77px 3px;
  display: flex;
  border-left: 1px solid #e6e6e6;
  background: #fafafa;
}
.scroll i {
  width: 8px;
  border-radius: 4px;
  background: #c1c1c1;
}

.downloads {
  display: flex;
  align-items: center;
  height: 49px;
  padding: 0 13px 0 3px;
  border-top: 1px solid #d5d5d5;
  background: linear-gradient(#fff 50%, #f6f6f6);
}
.file {
  display: flex;
  align-items: center;
  flex: 0 1 227px;
  height: 36px;
  padding: 0 17px 0 19px;
  border-right: 1px solid #ccc;
  font-size: 12px;
  color: #3c4043;
}
.file a {
  flex: 1;
  margin: 3px 0 0 15px;
  white-space: nowrap;
}
.showall {
  width: 81px;
  height: 32px;
  margin: 0 0 2px auto;
  border: 1px solid #d5d5d5;
  border-radius: 4px;
  font-size: 12px;
  color: #3c4043;
}
.shut {
  margin: 0 0 2px 13px;
}

.dock {
  position: relative;
  display: flex;
  height: 52px;
  margin: 0 34px;
  padding: 0 3px;
  border-radius: 5px 5px 0 0;
  background: linear-gradient(90deg, #3f6382, #43637c 60%, #4b6b86);
}
.app {
  position: relative;
  flex: 1;
  min-width: 0;
  align-items: flex-start;
  padding-top: 4px;
}
.app svg {
  width: 40px;
  height: 40px;
  overflow: visible;
}
.app.on::after {
  content: '';
  position: absolute;
  bottom: 2px;
  left: 50%;
  width: 4px;
  height: 4px;
  margin-left: -2px;
  border-radius: 50%;
  background: #06090c;
}
.divider {
  width: 1px;
  height: 38px;
  margin: 7px 10px 0 9px;
  background: #1c3a58;
}
</style>
